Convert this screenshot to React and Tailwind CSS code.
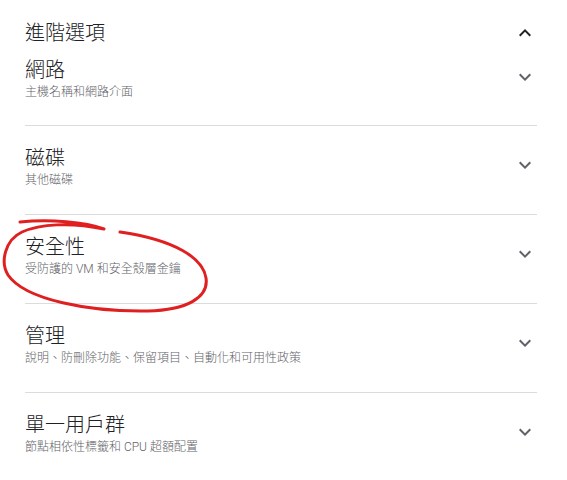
import React from "react";

const ChevronDown = ({ className }) => (
  <svg viewBox="0 0 24 24" width="24" height="24" className={className} fill="currentColor">
    <path d="M16.59 8.59L12 13.17 7.41 8.59 6 10l6 6 6-6z" />
  </svg>
);
const ChevronUp = ({ className }) => (
  <svg viewBox="0 0 24 24" width="24" height="24" className={className} fill="currentColor">
    <path d="M12 8l-6 6 1.41 1.41L12 10.83l4.59 4.58L18 14z" />
  </svg>
);

const sections = [
  { title: "網路", sub: "主機名稱和網路介面" },
  { title: "磁碟", sub: "其他磁碟" },
  { title: "安全性", sub: "受防護的 VM 和安全殼層金鑰" },
  { title: "管理", sub: "說明、防刪除功能、保留項目、自動化和可用性政策" },
  { title: "單一用戶群", sub: "節點相依性標籤和 CPU 超額配置" },
];

export default function App() {
  return (
    <div
      className="relative w-[567px] h-[480px] bg-white overflow-hidden"
      style={{ fontFamily: "Roboto, 'Noto Sans CJK TC', sans-serif" }}
    >
      <div className="pl-[25px] w-[537px]">
        <div className="flex items-start justify-between pt-[19px] h-[58px]">
          <div className="text-[20px] leading-[28px] font-light text-[#202124]">進階選項</div>
          <ChevronUp className="text-[#202124] mt-[2px]" />
        </div>
        {sections.map((s, i) => (
          <div
            key={s.title}
            className={
              "flex items-start justify-between " +
              (i === 0 ? "h-[67px]" : "border-t border-[#dadce0] h-[89px] pt-[20px]")
            }
          >
            <div>
              <div className="text-[20px] leading-[24px] font-light text-[#202124]">{s.title}</div>
              <div className="text-[12px] leading-[16px] font-light text-[#5f6368] mt-[2px]">{s.sub}</div>
            </div>
            <ChevronDown className="text-[#5f6368] mt-[7px]" />
          </div>
        ))}
      </div>
      <svg
        className="absolute left-0 top-0 pointer-events-none"
        width="567"
        height="480"
        viewBox="0 0 567 480"
        fill="none"
      >
        <path
          d="M20 222 C 50 219, 85 222, 104 229 M 104 229 C 70 222, 40 224, 22 232 C 5 240, 0 262, 8 275 C 25 300, 90 312, 148 311 C 186 310, 209 298, 206 278 C 203 258, 175 240, 120 232"
          stroke="#e02020"
          strokeWidth="3"
          strokeLinecap="round"
        />
      </svg>
    </div>
  );
}
